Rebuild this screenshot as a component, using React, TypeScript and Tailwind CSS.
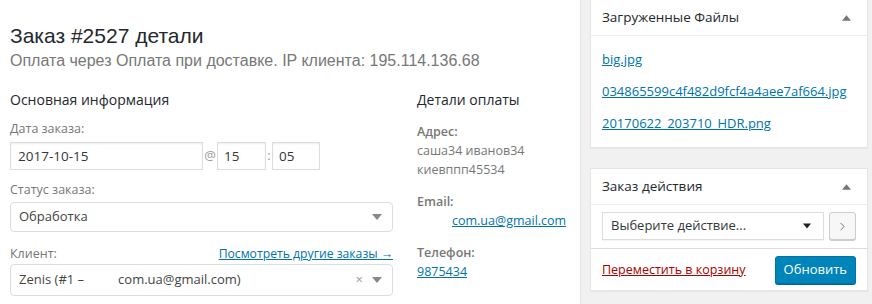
import { ChevronRight } from "lucide-react";

const ui = { fontFamily: '"Open Sans", "Noto Sans", sans-serif' };
const head = { fontFamily: '"Liberation Sans", Arial, sans-serif' };

function Arrow({ small = false }: { small?: boolean }) {
  return (
    <svg width={small ? 8 : 10} height={small ? 6 : 6} viewBox="0 0 10 6" className="shrink-0">
      <path d="M0 0 L10 0 L5 6 Z" fill={small ? "#222" : "#888"} />
    </svg>
  );
}

function BoxHeader({ title }: { title: string }) {
  return (
    <div className="flex items-center justify-between h-[36px] px-[11px] border-b border-[#eee]">
      <span className="text-[13.5px] text-[#23282d]">{title}</span>
      <svg width="9" height="6" viewBox="0 0 10 6" className="mr-[5px]">
        <path d="M0 6 L10 6 L5 0 Z" fill="#72777c" />
      </svg>
    </div>
  );
}

export default function App() {
  return (
    <div className="w-[872px] h-[304px] flex bg-[#f1f1f1] overflow-hidden" style={ui}>
      {/* order details */}
      <div className="w-[580px] bg-white pl-[10px] pt-[22px]">
        <h1 className="text-[21px] leading-[28px] text-[#23282d]" style={head}>
          Заказ #2527 детали
        </h1>
        <p className="text-[16px] leading-[22px] text-[#777]" style={head}>
          Оплата через Оплата при доставке. IP клиента: 195.114.136.68
        </p>

        <div className="flex mt-[18px]">
          <div className="w-[383px]">
            <h3 className="text-[14px] leading-[20px] text-[#23282d]">Основная информация</h3>

            <div className="mt-[10px] text-[12.5px] leading-[18px] text-[#777]">Дата заказа:</div>
            <div className="flex items-center mt-[4px] text-[13.5px] text-[#32373c]">
              <div className="w-[193px] h-[28px] border border-[#ddd] shadow-[inset_0_1px_2px_rgba(0,0,0,0.07)] px-[7px] flex items-center">
                2017-10-15
              </div>
              <span className="w-[14px] text-center text-[#999] text-[13px]">@</span>
              <div className="w-[49px] h-[28px] border border-[#ddd] shadow-[inset_0_1px_2px_rgba(0,0,0,0.07)] px-[6px] flex items-center">
                15
              </div>
              <span className="w-[6px] text-center text-[#999] text-[13px]">:</span>
              <div className="w-[48px] h-[28px] border border-[#ddd] shadow-[inset_0_1px_2px_rgba(0,0,0,0.07)] px-[6px] flex items-center">
                05
              </div>
            </div>

            <div className="mt-[11px] text-[12.5px] leading-[18px] text-[#777]">Статус заказа:</div>
            <div className="mt-[3px] h-[30px] border border-[#ddd] rounded-[4px] flex items-center justify-between pl-[8px] pr-[10px] text-[13px] text-[#444]">
              <span>Обработка</span>
              <Arrow />
            </div>

            <div className="mt-[13px] flex items-end justify-between text-[12.5px] leading-[18px]">
              <span className="text-[#777]">Клиент:</span>
              <a className="text-[#0073aa] underline text-[12.2px]">Посмотреть другие заказы →</a>
            </div>
            <div className="mt-[1px] h-[32px] border border-[#ddd] rounded-[4px] flex items-center justify-between pl-[8px] pr-[10px] text-[13px] text-[#444]">
              <span>
                Zenis (#1 –<span className="inline-block w-[34px]" />com.ua@gmail.com)
              </span>
              <span className="flex items-center gap-[9px]">
                <span className="text-[#999] text-[13px]">×</span>
                <Arrow />
              </span>
            </div>
          </div>

          <div className="ml-[24px] text-[12.5px] leading-[19px]">
            <h3 className="text-[14px] leading-[20px] text-[#23282d]">Детали оплаты</h3>
            <div className="mt-[12px] text-[#777] font-semibold">Адрес:</div>
            <div className="text-[#777]">саша34 иванов34</div>
            <div className="text-[#777]">киевппп45534</div>
            <div className="mt-[13px] text-[#777] font-semibold">Email:</div>
            <a className="block pl-[35px] text-[#0073aa] underline">com.ua@gmail.com</a>
            <div className="mt-[13px] text-[#777] font-semibold">Телефон:</div>
            <a className="block text-[#0073aa] underline">9875434</a>
          </div>
        </div>
      </div>

      {/* sidebar */}
      <div className="w-[10px] border-l border-[#e5e5e5] bg-[#f1f1f1]" />
      <div className="w-[278px]">
        <div className="bg-white border border-[#e5e5e5] -mt-px shadow-[0_1px_1px_rgba(0,0,0,0.04)]">
          <BoxHeader title="Загруженные Файлы" />
          <div className="px-[11px] pt-[14px] pb-[14px] flex flex-col gap-[13px] text-[13px] leading-[19px]">
            <a className="text-[#0073aa] underline">big.jpg</a>
            <a className="text-[#0073aa] underline">034865599c4f482d9fcf4a4aee7af664.jpg</a>
            <a className="text-[#0073aa] underline">20170622_203710_HDR.png</a>
          </div>
        </div>

        <div className="mt-[20px] bg-white border border-[#e5e5e5] shadow-[0_1px_1px_rgba(0,0,0,0.04)]">
          <BoxHeader title="Заказ действия" />
          <div className="px-[11px] pt-[7px] pb-[8px] flex items-center gap-[5px]">
            <div className="w-[226px] h-[28px] border border-[#ddd] flex items-center justify-between pl-[8px] pr-[12px] text-[13px] text-[#32373c] shadow-[0_1px_1px_rgba(0,0,0,0.04)]">
              <span>Выберите действие...</span>
              <Arrow small />
            </div>
            <div className="w-[27px] h-[28px] border border-[#ccc] rounded-[3px] bg-[#f7f7f7] shadow-[0_1px_0_#ccc] flex items-center justify-center text-[#555]">
              <ChevronRight size={13} strokeWidth={1.5} />
            </div>
          </div>
          <div className="border-t border-[#ddd] px-[11px] pt-[7px] pb-[6px] flex items-center justify-between">
            <a className="text-[#a00] underline text-[12.5px]">Переместить в корзину</a>
            <button className="h-[28px] px-[8px] bg-[#0085ba] border border-[#0073aa] rounded-[3px] text-white text-[13px] shadow-[0_1px_0_#006799]">
              Обновить
            </button>
          </div>
        </div>
      </div>
    </div>
  );
}
